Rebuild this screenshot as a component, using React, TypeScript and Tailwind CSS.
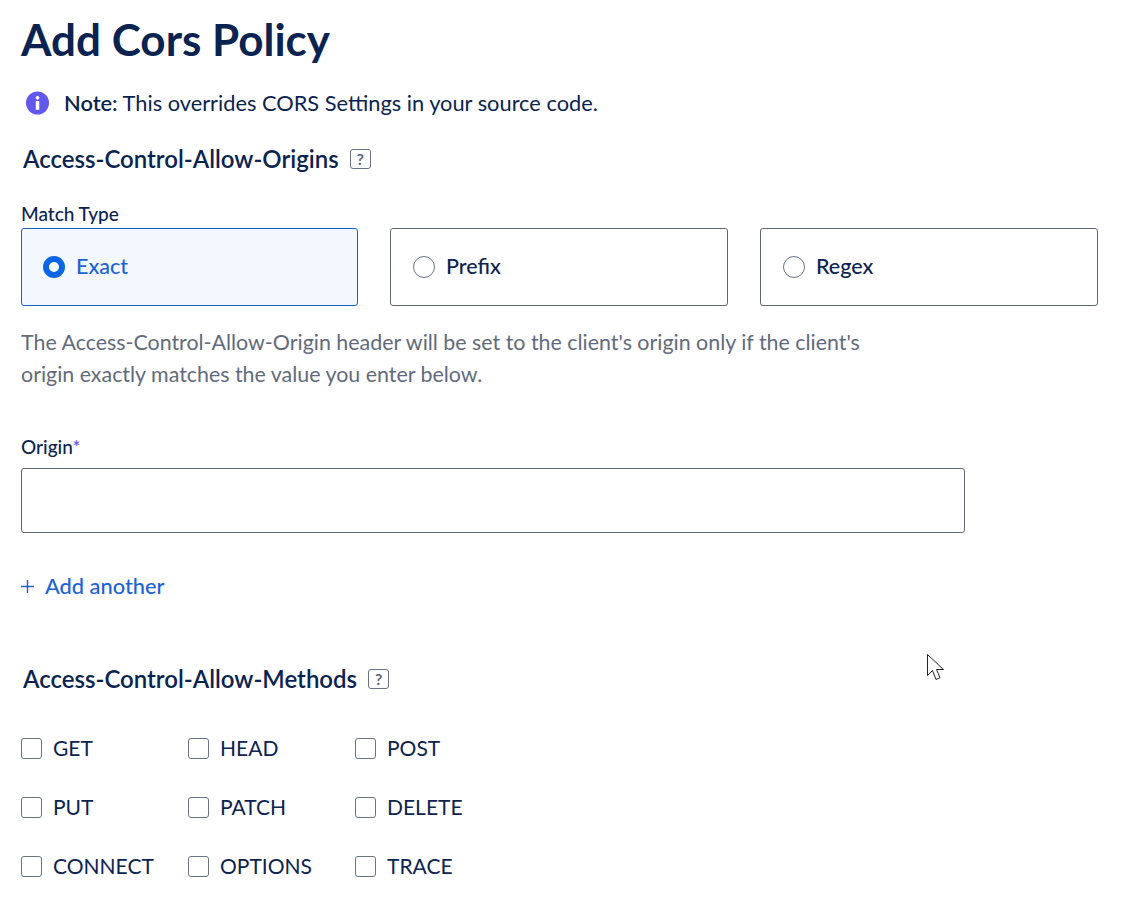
const navy = "text-[#0b2350]";

const HelpBadge = () => (
	<span className="flex h-[20px] w-[21px] items-center justify-center rounded-[3px] border-[1.5px] border-[#6b7280] text-[16px] font-bold leading-none text-[#5b6478]">
		?
	</span>
);

const SectionTitle = ({ title }: { title: string }) => (
	<div className="flex items-center gap-[11px] pl-[2px]">
		<h2 className={`text-[24px] font-semibold leading-[30px] ${navy}`}>{title}</h2>
		<HelpBadge />
	</div>
);

const MatchOption = ({ label, width, selected }: { label: string; width: string; selected?: boolean }) => (
	<div
		className={`flex h-[78px] items-center gap-[11px] rounded-[3px] border ${width} ${
			selected ? "border-[#0f62c9] bg-[#f3f8fe] pl-[21px]" : "border-[#5f6672] bg-white pl-[22px]"
		}`}
	>
		{selected ? (
			<span className="h-[22px] w-[22px] rounded-full border-[6px] border-[#0a66e4] bg-white" />
		) : (
			<span className="h-[22px] w-[22px] rounded-full border border-[#6b7280] bg-white" />
		)}
		<span className={`pb-[2px] text-[21.5px] font-medium ${selected ? "text-[#1a62d6]" : navy}`}>{label}</span>
	</div>
);

const MethodCheck = ({ label }: { label: string }) => (
	<label className="flex w-[167px] items-center gap-[11px]">
		<span className="h-[21px] w-[21px] rounded-[3px] border border-[#6b7280] bg-white" />
		<span className={`text-[21px] leading-[28px] ${navy}`}>{label}</span>
	</label>
);

const methodRows = [
	["GET", "HEAD", "POST"],
	["PUT", "PATCH", "DELETE"],
	["CONNECT", "OPTIONS", "TRACE"],
];

export default function App() {
	return (
		<div className="relative h-[924px] w-[1128px] overflow-hidden bg-white pl-[21px] font-['Lato',sans-serif]">
			<h1 className={`pt-[13px] text-[44px] font-bold leading-[52px] ${navy}`}>Add Cors Policy</h1>

			{/* Note */}
			<div className="mt-[24px] flex items-center gap-[15px] pl-[5px]">
				<svg width="23" height="24" viewBox="0 0 24 24">
					<circle cx="12" cy="12" r="12" fill="#6358ee" />
					<circle cx="12" cy="6.6" r="1.9" fill="#fff" />
					<rect x="10.2" y="10" width="3.6" height="9" rx="0.6" fill="#fff" />
				</svg>
				<p className={`text-[21.8px] leading-[28px] ${navy}`}>
					<span className="font-semibold">Note:</span> This overrides CORS Settings in your source code.
				</p>
			</div>

			<div className="mt-[27px]">
				<SectionTitle title="Access-Control-Allow-Origins" />
			</div>

			{/* Match type */}
			<div className={`mt-[28px] text-[19px] font-medium leading-[24px] ${navy}`}>Match Type</div>
			<div className="mt-[2px] flex gap-[32px]">
				<MatchOption label="Exact" width="w-[337px]" selected />
				<MatchOption label="Prefix" width="w-[338px]" />
				<MatchOption label="Regex" width="w-[338px]" />
			</div>

			<p className="mt-[20px] w-[900px] text-[21.4px] leading-[32px] text-[#5f6b7c]">
				The Access-Control-Allow-Origin header will be set to the client's origin only if the client's
				<br />
				origin exactly matches the value you enter below.
			</p>

			{/* Origin */}
			<div className={`mt-[45px] text-[19px] font-medium leading-[24px] ${navy}`}>
				Origin<span className="text-[#6358ee]">*</span>
			</div>
			<input
				type="text"
				className="mt-[9px] block h-[65px] w-[944px] rounded-[3px] border border-[#5f6672] bg-white outline-none"
			/>

			<div className="mt-[39px] flex items-center gap-[11px]">
				<svg width="13" height="13" viewBox="0 0 13 13" stroke="#1a62d6" strokeWidth="1.4" fill="none">
					<path d="M6.5 0v13M0 6.5h13" />
				</svg>
				<span className="text-[21.8px] font-medium leading-[28px] text-[#1a62d6]">Add another</span>
			</div>

			<div className="mt-[64px]">
				<SectionTitle title="Access-Control-Allow-Methods" />
			</div>

			{/* Methods */}
			<div className="mt-[40px] flex flex-col gap-[31px]">
				{methodRows.map((row) => (
					<div key={row[0]} className="flex">
						<MethodCheck label={row[0]} />
						<MethodCheck label={row[1]} />
						<MethodCheck label={row[2]} />
					</div>
				))}
			</div>

			{/* Mouse cursor */}
			<svg className="absolute left-[926px] top-[653px]" width="20" height="29" viewBox="0 0 20 29" fill="#fff" stroke="#222" strokeWidth="1">
				<path d="M1.5 1.5v21l5-5 3.5 9 4-1.8-3.5-8.2h7z" />
			</svg>
		</div>
	);
}
